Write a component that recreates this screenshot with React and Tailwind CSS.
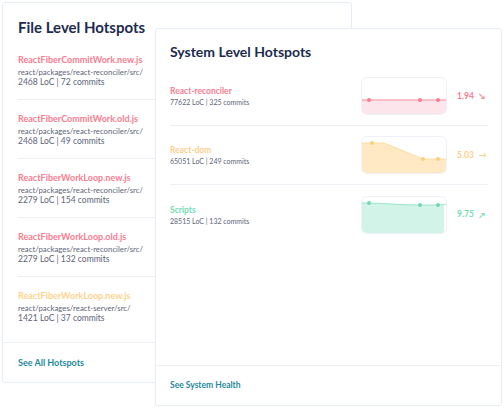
import React from 'react';

const files = [
  { name: 'ReactFiberCommitWork.new.js', path: 'react/packages/react-reconciler/src/', loc: '2468 LoC | 72 commits', color: 'text-[#f77d90]' },
  { name: 'ReactFiberCommitWork.old.js', path: 'react/packages/react-reconciler/src/', loc: '2468 LoC | 49 commits', color: 'text-[#f77d90]' },
  { name: 'ReactFiberWorkLoop.new.js', path: 'react/packages/react-reconciler/src/', loc: '2279 LoC | 154 commits', color: 'text-[#f77d90]' },
  { name: 'ReactFiberWorkLoop.old.js', path: 'react/packages/react-reconciler/src/', loc: '2279 LoC | 132 commits', color: 'text-[#f77d90]' },
  { name: 'ReactFiberWorkLoop.new.js', path: 'react/packages/react-server/src/', loc: '1421 LoC | 37 commits', color: 'text-[#fdd38e]' },
];

const systems = [
  {
    name: 'React-reconciler',
    loc: '77622 LoC | 325 commits',
    value: '1.94',
    arrow: '↘',
    text: 'text-[#f77d90]',
    line: 'M0 22 L86 22',
    area: 'M0 22 L86 22 L86 38 L0 38 Z',
    dots: [[7, 22], [58, 22], [76, 22]],
    stroke: '#f78a9b',
    fill: '#fde6eb',
    dot: '#f77d90',
  },
  {
    name: 'React-dom',
    loc: '65051 LoC | 249 commits',
    value: '5.03',
    arrow: '→',
    text: 'text-[#fdd08a]',
    line: 'M0 6 L22 6 L61 22 L86 22',
    area: 'M0 6 L22 6 L61 22 L86 22 L86 38 L0 38 Z',
    dots: [[10, 6], [61, 22], [76, 22]],
    stroke: '#fddca0',
    fill: '#fee9c4',
    dot: '#fccf7e',
  },
  {
    name: 'Scripts',
    loc: '28515 LoC | 132 commits',
    value: '9.75',
    arrow: '↗',
    text: 'text-[#74dbb3]',
    line: 'M0 6 C20 6 38 8 58 8 C68 8 72 8 76 8 C80 8 83 7 86 7',
    area: 'M0 6 C20 6 38 8 58 8 C68 8 72 8 76 8 C79 8 81 8 82 8 L82 38 L0 38 Z',
    dots: [[7, 6], [58, 8], [76, 8]],
    stroke: '#9be4c8',
    fill: '#d2f3e7',
    dot: '#70d9b1',
  },
];

const Sparkline = ({ s }) => (
  <div className="w-[86px] h-[38px] rounded-[6px] border border-[#eef0f7] overflow-hidden bg-white">
    <svg width="86" height="38" viewBox="0 0 86 38" className="block">
      <path d={s.area} fill={s.fill} />
      <path d={s.line} fill="none" stroke={s.stroke} strokeWidth="1" />
      {s.dots.map(([x, y], i) => (
        <circle key={i} cx={x} cy={y} r="2" fill={s.dot} />
      ))}
    </svg>
  </div>
);

export default function App() {
  return (
    <div className="relative w-[504px] h-[408px] bg-white overflow-hidden" style={{ fontFamily: 'Lato, "Noto Sans", sans-serif' }}>
      {/* File level card */}
      <div className="ml-[2px] mt-[2px] w-[350px] h-[381px] border border-[#e7edf5] rounded-[3px] bg-white flex flex-col">
        <div className="px-[15px] pt-[14px] h-[38px]">
          <h2 className="text-[15px] leading-[20px] font-bold text-[#1c2b4d]">File Level Hotspots</h2>
        </div>
        <div className="mx-[15px]">
          {files.map((f, i) => (
            <div key={i} className={`pt-[13px] h-[59px] ${i < files.length - 1 ? 'border-b border-[#eceff4]' : ''}`}>
              <div className={`text-[9px] leading-[12px] font-bold ${f.color}`}>{f.name}</div>
              <div className="mt-[1px] text-[7.8px] leading-[10px] text-[#5d6478]">{f.path}</div>
              <div className="text-[8.5px] leading-[10px] text-[#5d6478]">{f.loc}</div>
            </div>
          ))}
        </div>
        <div className="flex-1" />
        <div className="h-[40px] border-t border-[#eceff4] px-[15px] flex items-center">
          <span className="text-[9px] font-bold text-[#1d8a9c]">See All Hotspots</span>
        </div>
      </div>

      {/* System level card */}
      <div className="absolute left-[155px] top-[28px] w-[347px] h-[378px] border border-[#e7edf5] rounded-[3px] bg-white flex flex-col">
        <div className="px-[14px] pt-[13px] h-[38px]">
          <h2 className="text-[14px] leading-[20px] font-bold text-[#1c2b4d]">System Level Hotspots</h2>
        </div>
        <div className="ml-[14px] mr-[13px]">
          {systems.map((s, i) => (
            <div key={i} className={`h-[59px] flex items-center ${i < systems.length - 1 ? 'border-b border-[#eceff4]' : ''}`}>
              <div className="flex-1">
                <div className={`text-[8.5px] leading-[12px] font-bold ${s.text}`}>{s.name}</div>
                <div className="text-[7px] leading-[10px] text-[#5d6478]">{s.loc}</div>
              </div>
              <Sparkline s={s} />
              <div className={`w-[41px] pl-[10px] flex items-center gap-[5px] text-[8.5px] font-bold ${s.text}`}>
                <span>{s.value}</span>
                <span className="text-[8px]">{s.arrow}</span>
              </div>
            </div>
          ))}
        </div>
        <div className="flex-1" />
        <div className="h-[40px] border-t border-[#eceff4] px-[14px] flex items-center">
          <span className="text-[8.5px] font-bold text-[#1d8a9c]">See System Health</span>
        </div>
      </div>
    </div>
  );
}
